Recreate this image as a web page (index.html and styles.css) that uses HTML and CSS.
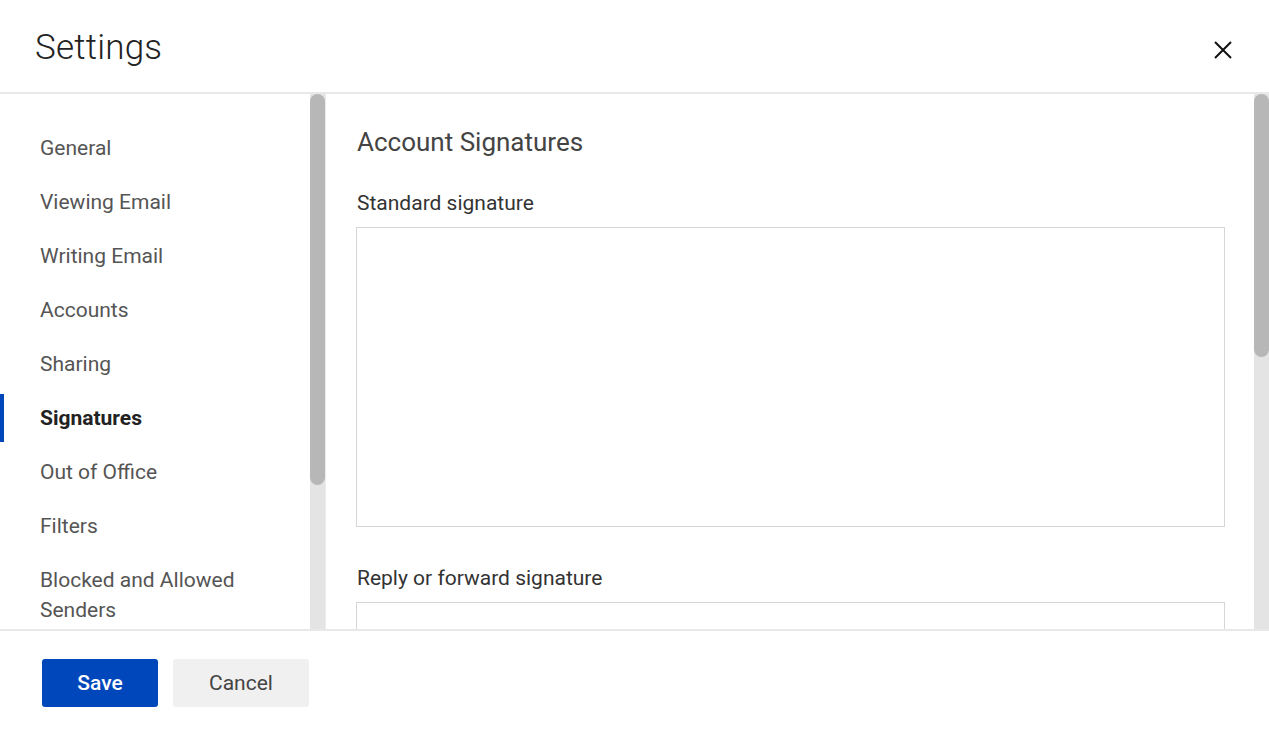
FILE: index.html
```html
<!DOCTYPE html>
<html>
<head>
    <title>Settings</title>
    <link rel="stylesheet" href="styles.css">
</head>
<body>
    <div class="dialog">
        <div class="header">
            <h1>Settings</h1>
            <button class="close" type="button" aria-label="Close">
                <svg width="20" height="20" viewBox="0 0 20 20"><path d="M2 2 L18 18 M18 2 L2 18" stroke="#111" stroke-width="2" fill="none"/></svg>
            </button>
        </div>

        <div class="body">
            <div class="sidebar">
                <ul class="nav">
                    <li>General</li>
                    <li>Viewing Email</li>
                    <li>Writing Email</li>
                    <li>Accounts</li>
                    <li>Sharing</li>
                    <li class="active">Signatures</li>
                    <li>Out of Office</li>
                    <li>Filters</li>
                    <li>Blocked and Allowed Senders</li>
                </ul>
                <div class="track"><div class="thumb" style="height: 391px"></div></div>
            </div>

            <div class="main">
                <div class="content">
                    <h2>Account Signatures</h2>
                    <label class="field-label">Standard signature</label>
                    <div class="sig-box"></div>
                    <label class="field-label">Reply or forward signature</label>
                    <div class="sig-box"></div>
                </div>
                <div class="track"><div class="thumb" style="height: 263px"></div></div>
            </div>
        </div>

        <div class="footer">
            <button class="btn primary" type="button">Save</button>
            <button class="btn" type="button">Cancel</button>
        </div>
    </div>
</body>
</html>
```

FILE: styles.css
```css
html, body { margin: 0; height: 100%; }
body { font-family: Roboto, "Liberation Sans", sans-serif; background: #fff; color: #333; }

.dialog { display: flex; flex-direction: column; height: 732px; }

.header { display: flex; align-items: center; justify-content: space-between; height: 92px; padding: 0 36px 0 35px; border-bottom: 2px solid #e8e8e8; flex-shrink: 0; }
.header h1 { margin: 2px 0 0; font-size: 35px; font-weight: 300; color: #222; letter-spacing: 0.2px; }
.close { background: none; border: 0; padding: 0; width: 20px; height: 20px; cursor: pointer; margin-top: 8px; }

.body { flex: 1; display: flex; min-height: 0; overflow: hidden; }

.sidebar { width: 326px; display: flex; flex-shrink: 0; border-right: 1px solid #ececec; box-sizing: border-box; }
.nav { list-style: none; margin: 0; padding: 30px 0 0; flex: 1; }
.nav li { padding: 9px 20px 9px 40px; margin-bottom: 6px; font-size: 21px; line-height: 30px; color: #555; }
.nav li.active { font-weight: 700; color: #222; box-shadow: inset 4px 0 0 #0047bb; }

.track { width: 15px; background: #e4e4e4; flex-shrink: 0; }
.thumb { background: #b7b7b7; border-radius: 8px; }

.main { flex: 1; display: flex; min-width: 0; }
.content { flex: 1; padding: 32px 29px 0 30px; overflow: hidden; }
.content h2 { margin: 0 0 31px 1px; font-size: 26px; line-height: 32px; font-weight: 400; color: #444; }
.field-label { display: block; font-size: 21px; line-height: 28px; color: #333; margin: 0 0 10px 1px; }
.sig-box { height: 298px; border: 1px solid #d6d6d6; margin-bottom: 37px; }

.footer { height: 101px; box-sizing: border-box; border-top: 2px solid #e8e8e8; display: flex; align-items: flex-start; gap: 15px; padding: 28px 0 0 42px; flex-shrink: 0; flex-basis: 103px; }
.btn { font-family: inherit; font-size: 21px; height: 48px; border: 0; border-radius: 3px; padding: 0; width: 136px; background: #f0f0f0; color: #444; cursor: pointer; }
.btn.primary { width: 116px; background: #0047bb; color: #fff; font-weight: 500; }
```
